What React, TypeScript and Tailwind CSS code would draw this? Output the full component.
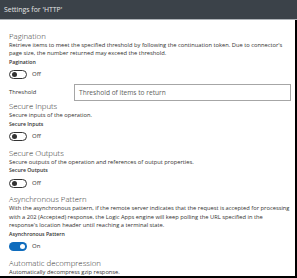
import React from "react";

function Toggle({ on }: { on?: boolean }) {
  return (
    <div className="mt-[4px] flex h-[9px] items-center">
      {on ? (
        <div className="relative h-[9px] w-[18px] rounded-full bg-[#0f6cbd]">
          <div className="absolute right-[2px] top-[2px] h-[5px] w-[5px] rounded-full bg-white" />
        </div>
      ) : (
        <div className="relative h-[9px] w-[18px] rounded-full border border-[#333]">
          <div className="absolute left-[1.5px] top-[1px] h-[5px] w-[5px] rounded-full bg-[#333]" />
        </div>
      )}
      <span className="ml-[5px] text-[6px] leading-[9px] text-[#323130]">{on ? "On" : "Off"}</span>
    </div>
  );
}

function Section({
  title,
  lines,
  label,
  on,
  first,
}: {
  title: string;
  lines: string[];
  label: string;
  on?: boolean;
  first?: boolean;
}) {
  return (
    <div className={first ? "" : "mt-[6.5px]"}>
      <div className="h-[10px] whitespace-nowrap text-[7.8px] font-light leading-[10px] text-[#323130]">{title}</div>
      {lines.map((l, i) => (
        <div key={i} className="h-[8.5px] whitespace-nowrap text-[5.75px] leading-[8.5px] text-[#323130]">
          {l}
        </div>
      ))}
      <div className="h-[8.5px] whitespace-nowrap text-[5.2px] font-semibold leading-[8.5px] text-[#323130]">{label}</div>
      <Toggle on={on} />
    </div>
  );
}

export default function App() {
  return (
    <div
      className="flex h-[278px] w-[297px] flex-col overflow-hidden bg-white"
      style={{ fontFamily: '"Open Sans", sans-serif' }}
    >
      <div className="flex h-[20px] shrink-0 items-center border-b border-[#aeb3b8] bg-[#3b4249] pl-[4px]">
        <span className="whitespace-nowrap text-[6.9px] leading-[10px] text-[#e6e6e6]">Settings for 'HTTP'</span>
      </div>
      <div className="flex-1 overflow-hidden border-b-2 border-r-2 border-black pl-[9px] pr-[4px] pt-[10.5px]">
        <Section
          first
          title="Pagination"
          lines={[
            "Retrieve items to meet the specified threshold by following the continuation token. Due to connector's",
            "page size, the number returned may exceed the threshold.",
          ]}
          label="Pagination"
        />
        <div className="mt-[5px] flex h-[17px] items-center">
          <span className="w-[65px] whitespace-nowrap text-[5.8px] text-[#323130]">Threshold</span>
          <div className="flex h-[17px] w-[217px] items-center border border-[#a6a6a6] pl-[4px]">
            <span className="whitespace-nowrap text-[6.6px] text-[#605e5c]">Threshold of items to return</span>
          </div>
        </div>
        <div className="-mt-[6.5px]">
          <Section
            title="Secure Inputs"
            lines={["Secure inputs of the operation."]}
            label="Secure Inputs"
          />
        </div>
        <Section
          title="Secure Outputs"
          lines={["Secure outputs of the operation and references of output properties."]}
          label="Secure Outputs"
        />
        <Section
          title="Asynchronous Pattern"
          lines={[
            "With the asynchronous pattern, if the remote server indicates that the request is accepted for processing",
            "with a 202 (Accepted) response, the Logic Apps engine will keep polling the URL specified in the",
            "response's location header until reaching a terminal state.",
          ]}
          label="Asynchronous Pattern"
          on
        />
        <Section
          title="Automatic decompression"
          lines={["Automatically decompress gzip response."]}
          label="Automatic decompression"
        />
      </div>
    </div>
  );
}
